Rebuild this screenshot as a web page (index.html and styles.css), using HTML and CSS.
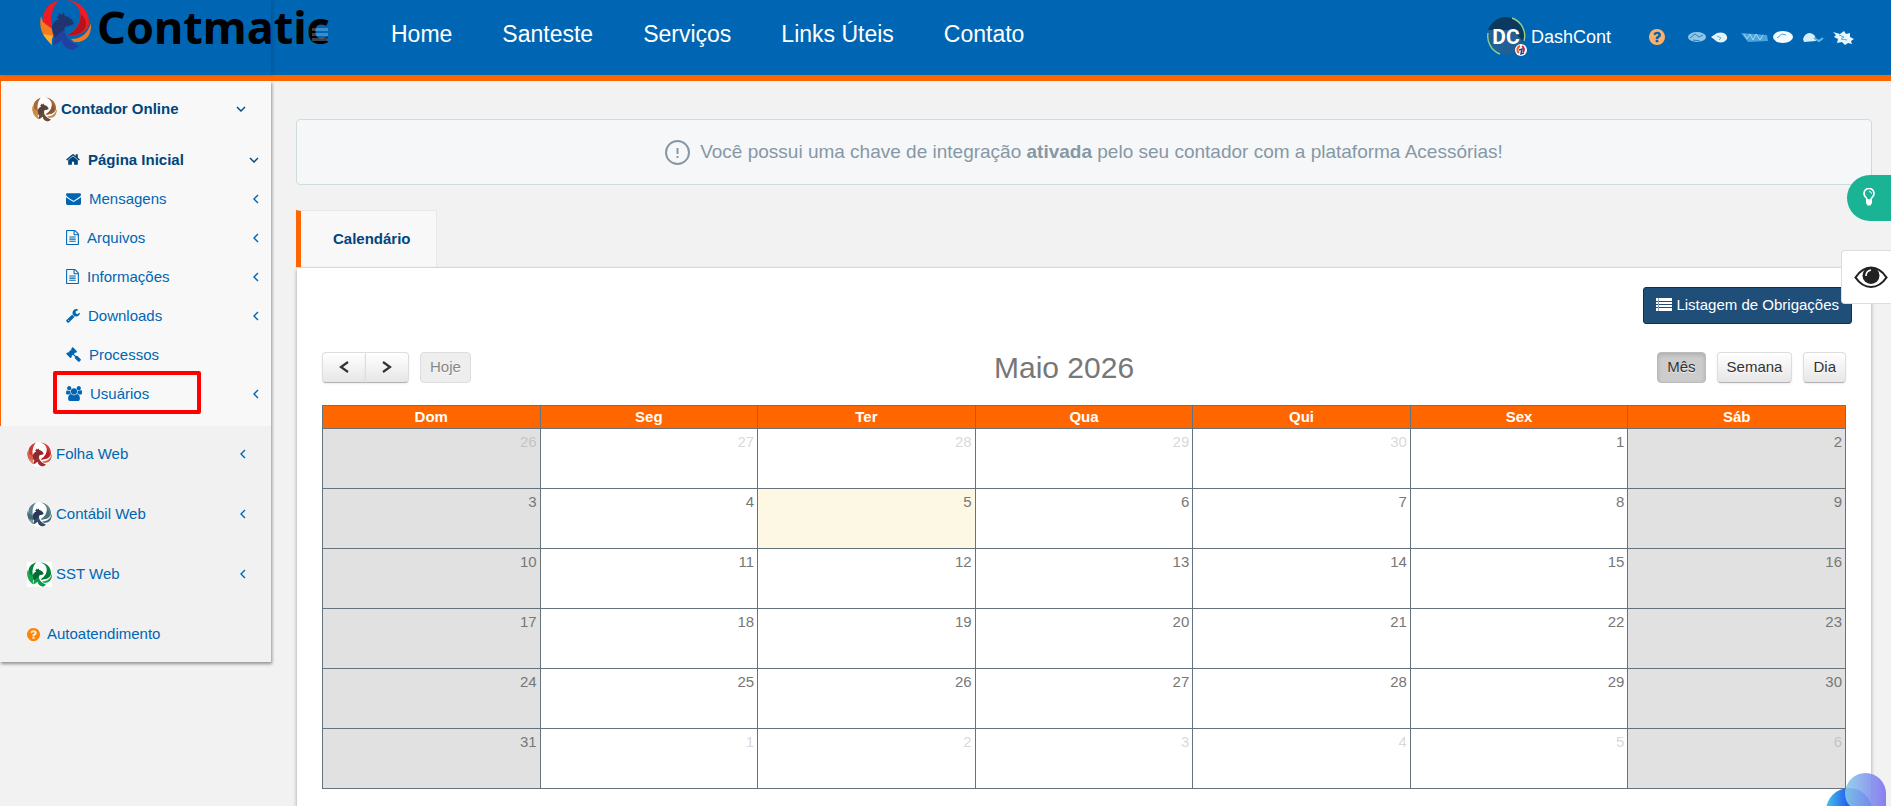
FILE: index.html
```html
<!DOCTYPE html>
<html lang="pt-BR">
<head>
    <meta charset="UTF-8">
    <meta name="viewport" content="width=device-width, initial-scale=1.0">
    <title>Contmatic - Contador Online</title>
    <link rel="stylesheet" href="styles.css">
</head>
<body>
    <svg class="sprite" aria-hidden="true">
        <symbol id="i-phoenix" viewBox="0 0 51 50">
            <path fill="var(--a)" d="M19 0C8 3 1 12 3 24l11 8C9 22 11 8 19 0z"/>
            <path fill="var(--b)" d="M1 16c-2 9 0 16 4 21l7 8c-1-6 1-10 4-13L3 22z"/>
            <path fill="var(--f)" d="M3 34c2 4 5 7 9 11-1-4 0-7 1-9z"/>
            <path fill="var(--a)" d="M27 0c10 3 15 11 13 19-2 9-8 13-12 16 11 1 20-3 21-11C50 12 41 1 27 0z"/>
            <path fill="var(--c)" d="M41 14c0 9-4 16-13 21 10 1 18-4 18-11 0-4-2-7-5-10z"/>
            <path fill="var(--b)" d="M51 23c1 14-7 20-17 19l-3-3c11 0 17-6 20-16z"/>
            <path fill="var(--e)" d="M13 45c0-9 7-15 12-17-2 6 3 13 14 18l-6 4c-7-1-11-5-11-10-3 2-6 5-9 5z"/>
            <path fill="var(--d)" d="M12 27c1-5 4-7 7-8l-3-2 3-1-1-3 4 2 1-3 2 4c5 1 8 4 9 8l-5 2c-3 0-5 1-5 4-4 2-7 5-9 8-2-4-3-6-3-11z"/>
        </symbol>
        <symbol id="i-left" viewBox="0 0 6 10"><path d="M5 1 1 5l4 4" fill="none" stroke="currentColor" stroke-width="1.4"/></symbol>
        <symbol id="i-down" viewBox="0 0 10 6"><path d="M1 1l4 4 4-4" fill="none" stroke="currentColor" stroke-width="1.4"/></symbol>
        <symbol id="i-home" viewBox="64 0 1664 1792"><path d="M1472 992v480q0 26-19 45t-45 19h-384v-384h-256v384h-384q-26 0-45-19t-19-45v-480q0-1 .5-3t.5-3l575-474 575 474q1 2 1 6zm223-69l-62 74q-8 9-21 11h-3q-13 0-21-7l-692-577-692 577q-12 8-24 7-13-2-21-11l-62-74q-8-10-7-23.5t11-21.5l719-599q32-26 76-26t76 26l244 204v-195q0-14 9-23t23-9h192q14 0 23 9t9 23v408l219 182q10 8 11 21.5t-7 23.5z"/></symbol>
        <symbol id="i-envelope" viewBox="0 0 1792 1792"><path d="M1792 710v794q0 66-47 113t-113 47h-1472q-66 0-113-47t-47-113v-794q44 49 101 87 362 246 497 345 57 42 92.5 65.5t94.5 48 110 24.5h2q51 0 110-24.5t94.5-48 92.5-65.5q170-123 498-345 57-39 100-87zm0-294q0 79-49 151t-122 123q-376 261-468 325-10 7-42.5 31t-54 38.5-52 32.5-57.5 27-50 9h-2q-23 0-50-9t-57.5-27-52-32.5-54-38.5-42.5-31q-91-64-262-182.5t-205-142.5q-62-42-117-115.5t-55-136.5q0-78 41.5-130t118.5-52h1472q65 0 112.5 47t47.5 113z"/></symbol>
        <symbol id="i-file" viewBox="128 0 1536 1792"><path d="M1596 380q28 28 48 76t20 88v1152q0 40-28 68t-68 28h-1344q-40 0-68-28t-28-68v-1600q0-40 28-68t68-28h896q40 0 88 20t76 48zm-444-244v376h376q-10-29-22-41l-313-313q-12-12-41-22zm384 1528v-1024h-416q-40 0-68-28t-28-68v-416h-768v1536h1280zm-1024-864q0-14 9-23t23-9h704q14 0 23 9t9 23v64q0 14-9 23t-23 9h-704q-14 0-23-9t-9-23v-64zm736 224q14 0 23 9t9 23v64q0 14-9 23t-23 9h-704q-14 0-23-9t-9-23v-64q0-14 9-23t23-9h704zm0 256q14 0 23 9t9 23v64q0 14-9 23t-23 9h-704q-14 0-23-9t-9-23v-64q0-14 9-23t23-9h704z"/></symbol>
        <symbol id="i-wrench" viewBox="64 0 1664 1792"><path d="M448 1472q0-26-19-45t-45-19-45 19-19 45 19 45 45 19 45-19 19-45zm644-420l-682 682q-37 37-90 37-52 0-91-37l-106-108q-38-36-38-90 0-53 38-91l681-681q39 98 114.5 173.5t173.5 114.5zm634-435q0 39-23 106-47 134-164.5 217.5t-258.5 83.5q-185 0-316.5-131.5t-131.5-316.5 131.5-316.5 316.5-131.5q58 0 121.5 16.5t107.5 46.5q16 11 16 28t-16 28l-293 169v224l193 107q5-3 79-48.5t135.5-81 70.5-35.5q15 0 23.5 10t8.5 25z"/></symbol>
        <symbol id="i-gavel" viewBox="0 0 1792 1792"><path d="M1771 1536q0 53-37 90l-107 108q-39 37-91 37-53 0-90-37l-363-364q-38-36-38-90 0-53 43-96l-256-256-126 126q-14 14-34 14t-34-14q2 2 12.5 12t12.5 13 10 11.5 10 13.5 6 13.5 5.5 16.5 1.5 18q0 38-28 68-3 3-16.5 18t-19 20.5-18.5 16.5-22 15.5-22 9-26 4.5q-40 0-68-28l-408-408q-28-28-28-68 0-13 4.5-26t9-22 15.5-22 16.5-18.5 20.5-19 18-16.5q30-28 68-28 10 0 18 1.5t16.5 5.5 13.5 6 13.5 10 11.5 10 13 12.5 12 12.5q-14-14-14-34t14-34l348-348q14-14 34-14t34 14q-2-2-12.5-12t-12.5-13-10-11.5-10-13.5-6-13.5-5.5-16.5-1.5-18q0-38 28-68 3-3 16.5-18t19-20.5 18.5-16.5 22-15.5 22-9 26-4.5q40 0 68 28l408 408q28 28 28 68 0 13-4.5 26t-9 22-15.5 22-16.5 18.5-20.5 19-18 16.5q-30 28-68 28-10 0-18-1.5t-16.5-5.5-13.5-6-13.5-10-11.5-10-13-12.5-12-12.5q14 14 14 34t-14 34l-126 126 256 256q43-43 96-43 52 0 91 37l363 363q37 39 37 91z"/></symbol>
        <symbol id="i-users" viewBox="0 0 1920 1792"><path d="M593 896q-162 5-265 128h-134q-82 0-138-40.5t-56-118.5q0-353 124-353 6 0 43.5 21t97.5 42.5 119 21.5q67 0 133-23-5 37-5 66 0 159 93 293zm1071 637q0 120-73 189.5t-194 69.5h-874q-121 0-194-69.5t-73-189.5q0-53 3.5-103.5t14-109 26.5-108.5 43-97.5 62-81 85.5-53.5 111.5-20q10 0 43 21.5t73 48 107 48 135 21.5 135-21.5 107-48 73-48 43-21.5q61 0 111.5 20t85.5 53.5 62 81 43 97.5 26.5 108.5 14 109 3.5 103.5zm-1024-1277q0 106-75 181t-181 75-181-75-75-181 75-181 181-75 181 75 75 181zm704 384q0 159-112.5 271.5t-271.5 112.5-271.5-112.5-112.5-271.5 112.5-271.5 271.5-112.5 271.5 112.5 112.5 271.5zm576 225q0 78-56 118.5t-138 40.5h-134q-103-123-265-128 93-134 93-293 0-29-5-66 66 23 133 23 59 0 119-21.5t97.5-42.5 43.5-21q124 0 124 353zm-128-609q0 106-75 181t-181 75-181-75-75-181 75-181 181-75 181 75 75 181z"/></symbol>
        <symbol id="i-question" viewBox="128 128 1536 1536"><path d="M1024 1376v-192q0-14-9-23t-23-9h-192q-14 0-23 9t-9 23v192q0 14 9 23t23 9h192q14 0 23-9t9-23zm256-672q0-88-55.5-163t-138.5-116-170-41q-243 0-371 213-15 24 8 42l132 100q7 6 19 6 16 0 25-12 53-68 86-92 34-24 86-24 48 0 85.5 26t37.5 59q0 38-20 61t-68 45q-63 28-115.5 86.5t-52.5 125.5v36q0 14 9 23t23 9h192q14 0 23-9t9-23q0-19 21.5-49.5t54.5-49.5q32-18 49-28.5t46-35 44.5-48 28-60.5 12.5-81zm384 192q0 209-103 385.5t-279.5 279.5-385.5 103-385.5-103-279.5-279.5-103-385.5 103-385.5 279.5-279.5 385.5-103 385.5 103 279.5 279.5 103 385.5z"/></symbol>
    </svg>

    <header class="header">
        <div class="brand">
            <svg class="logo" width="51" height="50"><use href="#i-phoenix"/></svg>
            <span class="brand-name">Contmatic</span>
            <button class="toggle" type="button" aria-label="Menu"><i></i><i></i><i></i></button>
        </div>
        <nav class="nav">
            <a href="#">Home</a>
            <a href="#">Santeste</a>
            <a href="#">Serviços</a>
            <a href="#">Links Úteis</a>
            <a href="#">Contato</a>
        </nav>
        <div class="user">
            <a href="#" class="dash">
                <svg width="40" height="40" viewBox="0 0 40 40">
                    <circle cx="19" cy="19" r="19" fill="#1f6096"/>
                    <path d="M1 13a19 19 0 0 1 36 0v12L25 13z" fill="#0b3a5e"/>
                    <path d="M25 1a19 19 0 0 1 12 23M1 16a19 19 0 0 0 12 21" fill="none" stroke="#8fd08a" stroke-width="1.4"/>
                    <text x="19" y="27" text-anchor="middle" class="dc">DC</text>
                    <circle cx="34" cy="33" r="6" fill="#fff"/>
                    <path d="M33 29a4 4 0 0 0-1 7" fill="none" stroke="#f15a24" stroke-width="2"/>
                    <path d="M35 29a4 4 0 0 1 1 6" fill="none" stroke="#d4202a" stroke-width="2"/>
                    <path d="M32 33l3-1-1 5 3-1" fill="none" stroke="#24408e" stroke-width="1.5"/>
                </svg>
                DashCont
            </a>
            <a href="#" class="help" aria-label="Ajuda"><svg width="16" height="16"><use href="#i-question"/></svg></a>
            <svg class="masked" width="168" height="16" viewBox="0 0 168 16">
                <ellipse cx="10" cy="8" rx="9" ry="5" fill="#8fc6e6"/>
                <path d="M3 9l5-4 4 3 4-2M6 11l7 1" stroke="#2f7eb8" fill="none"/>
                <path d="M24 8l6-4c7-2 11 2 10 6-3 5-10 4-12 1z" fill="#e4f3f5"/>
                <path d="M30 7l4 2-2 2" stroke="#6ca8cc" fill="none"/>
                <path d="M54 4l26 2 1 6-20 1z" fill="#4ba3dc"/>
                <path d="M57 5l3 5 3-5 3 6 3-6 4 6 3-5" stroke="#a4d8f2" fill="none"/>
                <ellipse cx="96" cy="8" rx="10" ry="6" fill="#f2fbfd"/>
                <path d="M90 9l5-4 4 1" stroke="#5ba4d2" fill="none"/>
                <path d="M116 10c2-7 8-8 12-3l1 5-12 1z" fill="#d5eef8"/>
                <path d="M127 9l5 3 4-3" stroke="#62b8e6" stroke-width="2" fill="none"/>
                <path d="M146 3l7 2 4-3 2 3 4-1v4l4 2-3 2 1 3-4-1-3 2-3-3-5 1 1-4-4-2 2-2z" fill="#e8f7fc"/>
                <path d="M152 6l5 2-3 2 6 1" stroke="#58aade" fill="none"/>
            </svg>
        </div>
    </header>

    <div class="layout">
        <aside class="sidebar">
            <div class="group-open">
                <a href="#" class="item active"><svg class="bird gold" width="25" height="25"><use href="#i-phoenix"/></svg>Contador Online<svg class="arrow" width="10" height="6"><use href="#i-down"/></svg></a>
                <ul class="submenu">
                    <li><a href="#" class="active"><svg width="14" height="15"><use href="#i-home"/></svg>Página Inicial<svg class="arrow" width="10" height="6"><use href="#i-down"/></svg></a></li>
                    <li><a href="#"><svg width="15" height="15"><use href="#i-envelope"/></svg>Mensagens<svg class="arrow" width="6" height="10"><use href="#i-left"/></svg></a></li>
                    <li><a href="#"><svg width="13" height="15"><use href="#i-file"/></svg>Arquivos<svg class="arrow" width="6" height="10"><use href="#i-left"/></svg></a></li>
                    <li><a href="#"><svg width="13" height="15"><use href="#i-file"/></svg>Informações<svg class="arrow" width="6" height="10"><use href="#i-left"/></svg></a></li>
                    <li><a href="#"><svg width="14" height="15"><use href="#i-wrench"/></svg>Downloads<svg class="arrow" width="6" height="10"><use href="#i-left"/></svg></a></li>
                    <li><a href="#"><svg width="15" height="15"><use href="#i-gavel"/></svg>Processos</a></li>
                    <li class="marked"><a href="#"><svg width="16" height="15"><use href="#i-users"/></svg>Usuários<svg class="arrow" width="6" height="10"><use href="#i-left"/></svg></a></li>
                </ul>
            </div>
            <div class="group">
                <a href="#" class="item"><svg class="bird red" width="25" height="25"><use href="#i-phoenix"/></svg>Folha Web<svg class="arrow" width="6" height="10"><use href="#i-left"/></svg></a>
                <a href="#" class="item"><svg class="bird slate" width="25" height="25"><use href="#i-phoenix"/></svg>Contábil Web<svg class="arrow" width="6" height="10"><use href="#i-left"/></svg></a>
                <a href="#" class="item"><svg class="bird green" width="25" height="25"><use href="#i-phoenix"/></svg>SST Web<svg class="arrow" width="6" height="10"><use href="#i-left"/></svg></a>
                <a href="#" class="item self-service"><svg width="13" height="13"><use href="#i-question"/></svg>Autoatendimento</a>
            </div>
        </aside>

        <main class="content">
            <div class="notice">
                <svg width="25" height="25" viewBox="0 0 25 25"><circle cx="12.5" cy="12.5" r="11.5" fill="none" stroke="currentColor" stroke-width="2"/><path d="M12.5 8v6M12.5 16v2" stroke="currentColor" stroke-width="2"/></svg>
                <p>Você possui uma chave de integração <strong>ativada</strong> pelo seu contador com a plataforma Acessórias!</p>
            </div>

            <div class="tabs">
                <a href="#" class="tab">Calendário</a>
            </div>

            <section class="panel">
                <div class="actions">
                    <button type="button" class="btn-list">
                        <svg width="16" height="13" viewBox="0 0 16 13" shape-rendering="crispEdges"><path fill="#fff" d="M0 0h16v3H0zM0 4h16v2H0zM0 7h16v2H0zM0 10h16v3H0z"/><path fill="#8fa7bd" d="M2 0h1v13H2z"/></svg>
                        Listagem de Obrigações
                    </button>
                </div>

                <div class="toolbar">
                    <div class="toolbar-side">
                        <div class="btn-group">
                            <button type="button" class="fc-btn" aria-label="Anterior"><svg width="10" height="12" viewBox="0 0 10 12"><path d="M9 1 2 6l7 5" fill="none" stroke="#333" stroke-width="2.2"/></svg></button>
                            <button type="button" class="fc-btn" aria-label="Próximo"><svg width="10" height="12" viewBox="0 0 10 12"><path d="M1 1l7 5-7 5" fill="none" stroke="#333" stroke-width="2.2"/></svg></button>
                        </div>
                        <button type="button" class="fc-btn" disabled>Hoje</button>
                    </div>
                    <h2>Maio 2026</h2>
                    <div class="toolbar-side">
                        <button type="button" class="fc-btn pressed">Mês</button>
                        <button type="button" class="fc-btn">Semana</button>
                        <button type="button" class="fc-btn">Dia</button>
                    </div>
                </div>

                <table class="calendar">
                    <thead>
                        <tr><th>Dom</th><th>Seg</th><th>Ter</th><th>Qua</th><th>Qui</th><th>Sex</th><th>Sáb</th></tr>
                    </thead>
                    <tbody>
                        <tr><td class="other">26</td><td class="other">27</td><td class="other">28</td><td class="other">29</td><td class="other">30</td><td>1</td><td>2</td></tr>
                        <tr><td>3</td><td>4</td><td class="today">5</td><td>6</td><td>7</td><td>8</td><td>9</td></tr>
                        <tr><td>10</td><td>11</td><td>12</td><td>13</td><td>14</td><td>15</td><td>16</td></tr>
                        <tr><td>17</td><td>18</td><td>19</td><td>20</td><td>21</td><td>22</td><td>23</td></tr>
                        <tr><td>24</td><td>25</td><td>26</td><td>27</td><td>28</td><td>29</td><td>30</td></tr>
                        <tr><td>31</td><td class="other">1</td><td class="other">2</td><td class="other">3</td><td class="other">4</td><td class="other">5</td><td class="other">6</td></tr>
                    </tbody>
                </table>
            </section>
        </main>
    </div>

    <button type="button" class="tips" aria-label="Dicas">
        <svg width="12" height="18" viewBox="0 0 12 18"><path d="M4 12c0-3-3-3-3-6.500a5 5 0 0 1 10 0C11 9 8 9 8 12z" fill="none" stroke="#fff" stroke-width="1.700"/><path d="M3 12h6v3l-1.500 2.500h-3L3 15z" fill="#fff"/><path d="M6 3.500q2.500 0 2.500 2.200" fill="none" stroke="#fff"/></svg>
    </button>
    <button type="button" class="contrast" aria-label="Acessibilidade">
        <svg width="34" height="23" viewBox="0 0 34 23"><path d="M1.500 11.500Q8 1.500 17 1.500t15.500 10Q26 21 17 21T1.500 11.500z" fill="#fff" stroke="#222" stroke-width="2.200"/><circle cx="17" cy="9.500" r="8.500" fill="#222"/><path d="M12 10q0-5 5-6" fill="none" stroke="#fff" stroke-width="1.600"/></svg>
    </button>
    <button type="button" class="chat" aria-label="Chat">
        <svg width="61" height="33" viewBox="0 0 61 33">
            <defs>
                <linearGradient id="g1"><stop offset="0" stop-color="#45c3e8"/><stop offset=".45" stop-color="#2563f0"/><stop offset="1" stop-color="#2a5cf0"/></linearGradient>
                <linearGradient id="g2"><stop offset="0" stop-color="#86cbe6"/><stop offset="1" stop-color="#7c6cf0"/></linearGradient>
            </defs>
            <circle cx="23" cy="38" r="23" fill="url(#g1)"/>
            <path d="M19 20.500a20.500 20.500 0 0 1 41 0V33H24q-5-5-5-12.500z" fill="url(#g2)" opacity=".88"/>
        </svg>
    </button>
</body>
</html>
```
FILE: styles.css
```css
*,
*::after {
    margin: 0;
    padding: 0;
    box-sizing: border-box;
}

body {
    font-family: "Liberation Sans", Arial, sans-serif;
    font-size: 15px;
    line-height: 20px;
    color: #777;
    background-color: #f2f2f2;
    min-height: 100vh;
    display: flex;
    flex-direction: column;
}

a {
    color: #0066b3;
    text-decoration: none;
}

button {
    font: inherit;
    cursor: pointer;
}

svg {
    flex: none;
    fill: currentColor;
}

.sprite {
    position: absolute;
    width: 0;
    height: 0;
}

/* header */
.header {
    display: flex;
    height: 81px;
    background-color: #0066b3;
    border-bottom: 6px solid #ff6600;
    color: #fff;
}

.brand {
    position: relative;
    display: flex;
    width: 271px;
    padding-left: 40px;
    box-shadow: 2px 0 4px rgba(0, 0, 0, 0.15);
}

.brand-name {
    margin-left: 6px;
    font-family: "Noto Sans", "Open Sans", sans-serif;
    font-size: 45px;
    font-weight: bold;
    line-height: 54px;
    color: #000;
}

.toggle {
    position: absolute;
    left: 312px;
    top: 28px;
    width: 16px;
    border: none;
    background: none;
    opacity: 0.25;
}

.toggle i {
    display: block;
    height: 3px;
    margin-bottom: 2px;
    background-color: #fff;
}

.nav {
    display: flex;
    gap: 50px;
    margin-left: 120px;
    font-size: 23px;
    line-height: 68px;
}

.nav a,
.user a {
    color: #fff;
}

.user {
    display: flex;
    align-items: center;
    height: 74px;
    margin-left: auto;
    padding-right: 36px;
}

.dash {
    display: flex;
    align-items: center;
    gap: 4px;
    font-size: 18px;
}

.dc {
    font-family: Roboto, sans-serif;
    font-size: 21px;
    font-weight: bold;
    fill: #fff;
}

.user .help {
    display: flex;
    margin: 0 22px 0 38px;
    color: #ffb066;
}

/* phoenix colours */
.logo {
    --a: #ed1c24;
    --b: #f47a20;
    --c: #b5121b;
    --d: #22346f;
    --e: #2340a0;
    --f: #fbb034;
}

.gold {
    --a: #a9683a;
    --b: #c98a45;
    --c: #8a5636;
    --d: #5b4238;
    --e: #6b4a38;
    --f: #d99a3c;
}

.red {
    --a: #cf3b33;
    --b: #d9604a;
    --c: #b52026;
    --d: #8c2a30;
    --e: #a02c30;
    --f: #e08a70;
}

.slate {
    --a: #5c868d;
    --b: #48687e;
    --c: #4a7078;
    --d: #27395a;
    --e: #344a68;
    --f: #7ba0a4;
}

.green {
    --a: #07843c;
    --b: #17a750;
    --c: #067a3a;
    --d: #056b32;
    --e: #0a9a48;
    --f: #17a750;
}

.bird {
    border-radius: 50%;
    background-color: #fff;
}

.bird.green {
    border-radius: 0;
}

/* sidebar */
.layout {
    display: flex;
    flex: 1;
}

.sidebar {
    flex: none;
    align-self: flex-start;
    width: 271px;
    background-color: #f1f1f1;
    box-shadow: 1px 2px 3px rgba(0, 0, 0, 0.4);
}

.group-open {
    padding-bottom: 13px;
    border-left: 1px solid #ff6600;
    background-color: #f8f8f8;
}

.item {
    display: flex;
    align-items: center;
    gap: 4px;
    height: 56px;
    padding: 0 25px 0 27px;
}

.group-open .item {
    padding-left: 31px;
}

.group {
    display: flex;
    flex-direction: column;
    gap: 4px;
}

.active {
    font-weight: bold;
    color: #00457c;
}

.arrow {
    margin-left: auto;
}

.self-service {
    gap: 7px;
}

.self-service svg {
    color: #ff8400;
}

.submenu {
    padding-top: 3px;
    list-style: none;
}

.submenu a {
    display: flex;
    align-items: center;
    gap: 8px;
    height: 39px;
    padding: 0 12px 0 65px;
}

.marked {
    position: relative;
}

.marked::after {
    content: "";
    position: absolute;
    left: 52px;
    top: -3px;
    width: 148px;
    height: 43px;
    border: 4px solid #ff0000;
    border-radius: 2px;
    pointer-events: none;
}

/* content */
.content {
    display: flex;
    flex: 1;
    flex-direction: column;
    padding: 38px 19px 0 25px;
}

.notice {
    display: flex;
    align-items: center;
    justify-content: center;
    gap: 10px;
    height: 66px;
    margin-bottom: 25px;
    border: 1px solid #cfdadd;
    border-radius: 4px;
    background-color: #f6f7f9;
    color: #8697a5;
    font-size: 19px;
}

.tabs {
    display: flex;
    border-bottom: 1px solid #e0e0e0;
}

.tab {
    padding: 18px 25px 18px 32px;
    border: 1px solid #e7eaec;
    border-left: 5px solid #ff6600;
    border-bottom: none;
    background-color: #f8f8f8;
    color: #00457c;
    font-weight: bold;
}

.panel {
    flex: 1;
    margin: 0 1px;
    padding: 19px 25px 16px;
    background-color: #fff;
    box-shadow: 0 2px 4px rgba(0, 0, 0, 0.35);
}

.actions {
    display: flex;
    justify-content: flex-end;
    margin: 0 -6px 28px 0;
}

.btn-list {
    display: flex;
    align-items: center;
    gap: 4px;
    height: 37px;
    padding: 0 12px 2px;
    border: 1px solid #12314d;
    border-radius: 3px;
    background-color: #1f4e79;
    color: #fff;
}

.toolbar {
    display: flex;
    justify-content: space-between;
    align-items: center;
    margin-bottom: 22px;
}

.toolbar h2 {
    font-size: 30px;
    font-weight: normal;
    line-height: 31px;
}

.toolbar-side {
    display: flex;
    gap: 11px;
}

.btn-group {
    display: flex;
}

.fc-btn {
    height: 31px;
    padding: 0 9px 2px;
    border: 1px solid #ddd;
    border-bottom-color: #b3b3b3;
    border-radius: 4px;
    background: linear-gradient(#fff, #e6e6e6);
    box-shadow: 0 1px 2px rgba(0, 0, 0, 0.08);
    color: #333;
    text-shadow: 0 1px 1px rgba(255, 255, 255, 0.75);
}

.fc-btn.pressed {
    border-color: #bbb;
    background: #ccc;
    box-shadow: inset 0 2px 4px rgba(0, 0, 0, 0.15);
}

.fc-btn:disabled {
    border-color: #ddd;
    background: #eee;
    box-shadow: none;
    color: #888;
}

.btn-group .fc-btn {
    display: flex;
    align-items: center;
    justify-content: center;
    width: 44px;
}

.btn-group .fc-btn:first-child {
    border-radius: 4px 0 0 4px;
}

.btn-group .fc-btn:last-child {
    margin-left: -1px;
    border-radius: 0 4px 4px 0;
}

.calendar {
    width: 100%;
    table-layout: fixed;
    border-collapse: collapse;
}

.calendar th,
.calendar td {
    border: 1px solid #66727c;
}

.calendar th {
    height: 23px;
    background-color: #ff6600;
    color: #fff;
}

.calendar td {
    height: 60px;
    padding: 3px 3px 0;
    text-align: right;
    vertical-align: top;
}

.calendar td:first-child,
.calendar td:last-child {
    background-color: #e1e1e1;
}

.calendar .other {
    color: rgba(119, 119, 119, 0.3);
}

.calendar .today {
    background-color: #fcf8e3;
}

/* floating widgets */
.tips,
.contrast,
.chat {
    position: fixed;
    right: 0;
    border: none;
    background: none;
}

.tips {
    top: 175px;
    width: 44px;
    height: 46px;
    padding-top: 2px;
    border-radius: 23px 0 0 23px;
    background-color: #1ab394;
}

.contrast {
    top: 250px;
    width: 50px;
    height: 54px;
    padding-left: 12px;
    border: 1px solid #ddd;
    border-right: none;
    border-radius: 4px 0 0 4px;
    background-color: #fff;
}

.contrast svg {
    display: block;
}

.chat {
    right: 4px;
    bottom: 0;
    height: 33px;
}
```
